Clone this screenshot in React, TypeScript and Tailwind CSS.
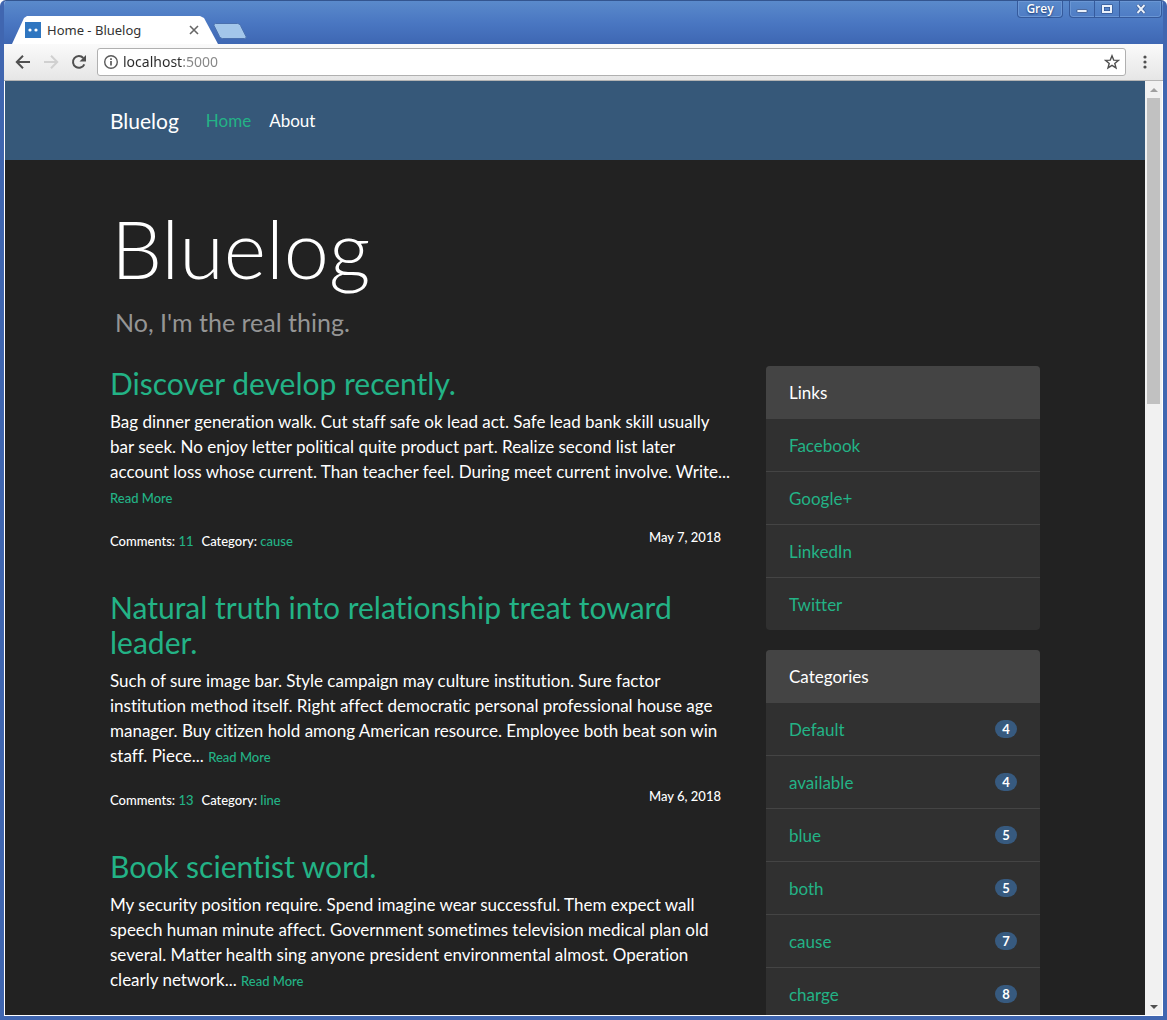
import React from "react";

type Post = {
  title: string;
  body: string;
  meta?: { comments: number; category: string; date: string };
};

const posts: Post[] = [
  {
    title: "Discover develop recently.",
    body: "Bag dinner generation walk. Cut staff safe ok lead act. Safe lead bank skill usually bar seek. No enjoy letter political quite product part. Realize second list later account loss whose current. Than teacher feel. During meet current involve. Write...",
    meta: { comments: 11, category: "cause", date: "May 7, 2018" },
  },
  {
    title: "Natural truth into relationship treat toward leader.",
    body: "Such of sure image bar. Style campaign may culture institution. Sure factor institution method itself. Right affect democratic personal professional house age manager. Buy citizen hold among American resource. Employee both beat son win staff. Piece...",
    meta: { comments: 13, category: "line", date: "May 6, 2018" },
  },
  {
    title: "Book scientist word.",
    body: "My security position require. Spend imagine wear successful. Them expect wall speech human minute affect. Government sometimes television medical plan old several. Matter health sing anyone president environmental almost. Operation clearly network...",
  },
];

const links = ["Facebook", "Google+", "LinkedIn", "Twitter"];

const categories: [string, number][] = [
  ["Default", 4],
  ["available", 4],
  ["blue", 5],
  ["both", 5],
  ["cause", 7],
  ["charge", 8],
];

function TitleBar() {
  return (
    <div className="flex h-[43px] shrink-0 items-end bg-linear-to-b from-[#5a8acb] via-[#4a77c2] to-[#3e67b3] pl-2">
      <div className="flex h-7 w-[206px] items-center bg-white pr-[18px] pl-[13px] [clip-path:polygon(0_100%,12px_2px,15px_0,188px_0,192px_2px,100%_100%)]">
        <svg viewBox="0 0 16 16" className="size-4 shrink-0" aria-hidden="true">
          <rect width="16" height="16" fill="#2f76c0" />
          <circle cx="5" cy="8" r="1.6" fill="#fff" />
          <circle cx="11" cy="8" r="1.6" fill="#fff" />
        </svg>
        <span className="ml-[6px] flex-1 font-['Noto_Sans',sans-serif] text-[13px] leading-5 whitespace-nowrap text-[#333]">
          Home - Bluelog
        </span>
        <button aria-label="Close tab" className="grid size-3 place-items-center">
          <svg viewBox="0 0 10 10" className="size-[10px]" stroke="#666" strokeWidth="1.6" aria-hidden="true">
            <path d="M1 1l8 8M9 1l-8 8" />
          </svg>
        </button>
      </div>
      <button aria-label="New tab" className="mb-[5px] -ml-[5px] h-4 w-[34px]">
        <svg viewBox="0 0 34 16" className="h-4 w-[34px]" aria-hidden="true">
          <path d="M2.500 .5H24.500q2 0 3 2l5.500 11q.8 2-1.500 2H9.500q-2 0-3-2L1 2.500Q.5.5 2.500.5z" fill="#a3c6ea" stroke="#4a70ae" />
        </svg>
      </button>
      <div className="ml-auto flex self-start">
        <button className="mr-[6px] h-[17px] w-[46px] rounded-b border border-t-0 border-[#355a9c] font-['Open_Sans',sans-serif] text-xs leading-4 font-semibold text-white shadow-[inset_0_0_0_1px_#6a96d4] [text-shadow:0_1px_2px_#16346a]">
          Grey
        </button>
        <div className="mr-px flex h-[17px] overflow-hidden rounded-b border border-t-0 border-[#355a9c] shadow-[inset_0_0_0_1px_#6a96d4]">
          <button aria-label="Minimize" className="grid w-[25px] place-items-center border-r border-[#355a9c]">
            <svg viewBox="0 0 12 10" className="h-[10px] w-3" aria-hidden="true">
              <rect x="1" y="5.500" width="10" height="3" rx=".5" fill="#e9f1fb" stroke="#29477f" strokeWidth=".7" />
            </svg>
          </button>
          <button aria-label="Maximize" className="grid w-[25px] place-items-center border-r border-[#355a9c]">
            <svg viewBox="0 0 12 10" className="h-[10px] w-3" aria-hidden="true">
              <rect x="2" y="2" width="8" height="6" fill="none" stroke="#29477f" strokeWidth="3" />
              <rect x="2" y="2" width="8" height="6" fill="none" stroke="#e9f1fb" strokeWidth="2" />
            </svg>
          </button>
          <button aria-label="Close" className="grid w-[41px] place-items-center">
            <svg viewBox="0 0 12 10" className="h-[10px] w-3" aria-hidden="true">
              <path d="M2.500 1l7 8M9.500 1l-7 8" stroke="#29477f" strokeWidth="3.200" />
              <path d="M2.500 1l7 8M9.500 1l-7 8" stroke="#e9f1fb" strokeWidth="2" />
            </svg>
          </button>
        </div>
      </div>
    </div>
  );
}

function Toolbar() {
  return (
    <div className="flex h-[37px] shrink-0 items-center border-b border-[#b4b4b4] bg-linear-to-b from-[#fafafa] to-[#e6e6e6] pl-[11px]">
      <button aria-label="Back" className="size-4">
        <svg viewBox="0 0 16 16" className="size-4" fill="none" stroke="#505050" strokeWidth="2" aria-hidden="true">
          <path d="M15 8H2.500M8 1.800L1.800 8L8 14.200" />
        </svg>
      </button>
      <button aria-label="Forward" className="ml-3 size-4">
        <svg viewBox="0 0 16 16" className="size-4" fill="none" stroke="#d0d0d0" strokeWidth="2" aria-hidden="true">
          <path d="M1 8h12.500M8 1.800L14.200 8L8 14.200" />
        </svg>
      </button>
      <button aria-label="Reload" className="ml-3 size-4">
        <svg viewBox="0 0 16 16" className="size-4" aria-hidden="true">
          <path d="M13.300 10.300A5.900 5.900 0 1 1 12.300 4" fill="none" stroke="#505050" strokeWidth="2" />
          <path d="M15 1v6.500H8.500z" fill="#505050" />
        </svg>
      </button>
      <label className="ml-[10px] flex h-7 flex-1 items-center rounded-[3px] border border-[#b0b0b0] bg-white px-[5px]">
        <svg viewBox="0 0 16 16" className="size-4 shrink-0" aria-hidden="true">
          <circle cx="8" cy="8" r="6.300" fill="none" stroke="#5a5a5a" strokeWidth="1.400" />
          <path d="M8 7v4.500M8 4.200v1.700" stroke="#5a5a5a" strokeWidth="1.700" />
        </svg>
        <input
          type="text"
          aria-label="Address"
          defaultValue="localhost:5000"
          className="ml-1 w-40 flex-1 bg-[linear-gradient(90deg,#2a2a2a_60px,#858585_60px)] bg-clip-text font-['Noto_Sans',sans-serif] text-sm leading-6 text-transparent outline-none"
        />
        <button aria-label="Bookmark this page" className="size-4">
          <svg viewBox="0 0 16 16" className="size-4" fill="none" stroke="#505050" strokeWidth="1.400" strokeLinejoin="miter" aria-hidden="true">
            <path d="M8 1.800l1.700 4.300 4.700.3-3.600 3 1.200 4.500L8 11.400l-4 2.500 1.200-4.500-3.600-3 4.700-.3z" />
          </svg>
        </button>
      </label>
      <button aria-label="Menu" className="grid w-[37px] place-items-center">
        <svg viewBox="0 0 4 14" className="h-[14px] w-1" fill="#505050" aria-hidden="true">
          <circle cx="2" cy="2" r="1.600" />
          <circle cx="2" cy="7" r="1.600" />
          <circle cx="2" cy="12" r="1.600" />
        </svg>
      </button>
    </div>
  );
}

function Scrollbar() {
  return (
    <div className="flex w-[17px] shrink-0 flex-col items-center bg-[#f1f1f1]">
      <button aria-label="Scroll up" className="grid h-[17px] w-full shrink-0 place-items-center">
        <svg viewBox="0 0 8 4" className="h-1 w-2" fill="#a0a0a0" aria-hidden="true">
          <path d="M0 4L4 0l4 4z" />
        </svg>
      </button>
      <div className="w-full flex-1 px-[2px]">
        <div className="h-[34%] bg-[#c1c1c1]" />
      </div>
      <button aria-label="Scroll down" className="grid h-[17px] w-full shrink-0 place-items-center">
        <svg viewBox="0 0 8 4" className="h-1 w-2" fill="#505050" aria-hidden="true">
          <path d="M0 0l4 4 4-4z" />
        </svg>
      </button>
    </div>
  );
}

function PostItem({ post }: { post: Post }) {
  return (
    <article className="mb-[37px]">
      <h3 className="mb-2 text-[30px] leading-[35px]">
        <a href="#post" className="text-[#23b386]">{post.title}</a>
      </h3>
      <p className="-mr-3 mb-4 text-[17px] leading-[25px]">
        {post.body}{" "}
        <a href="#post" className="text-[13px] leading-5 font-medium whitespace-nowrap text-[#23b386]">Read More</a>
      </p>
      {post.meta && (
        <div className="flex items-start justify-between text-[13px] leading-6 font-medium">
          <div className="pt-1">
            Comments: <a href="#comments" className="mr-2 text-[#23b386]">{post.meta.comments}</a>
            Category: <a href="#category" className="text-[#23b386]">{post.meta.category}</a>
          </div>
          <time>{post.meta.date}</time>
        </div>
      )}
    </article>
  );
}

function Card({ title, children }: { title: string; children: React.ReactNode }) {
  return (
    <section className="mb-5 overflow-hidden rounded bg-[#303030] text-[17px]">
      <h2 className="bg-[#444] px-[23px] pt-[15px] pb-[14px] leading-6">{title}</h2>
      <ul className="divide-y divide-[#444]">{children}</ul>
    </section>
  );
}

function Row({ name, count }: { name: string; count?: number }) {
  return (
    <li className="flex items-start justify-between px-[23px] pt-[15px] pb-[13px] leading-6">
      <a href="#item" className="text-[#23b386]">{name}</a>
      {count !== undefined && (
        <span className="mt-[2px] h-[18px] w-[22px] rounded-full bg-[#375a7f] text-center text-[13px] leading-[18px] font-bold">
          {count}
        </span>
      )}
    </li>
  );
}

export default function App() {
  return (
    <div className="flex h-screen flex-col overflow-hidden rounded-t-md border-x-4 border-t border-b-4 border-[#4066b0] border-t-[#33558f] bg-white">
      <TitleBar />
      <Toolbar />
      <div className="flex min-h-0 flex-1 border-x border-b border-white">
        <div className="min-w-0 flex-1 overflow-hidden bg-[#222] font-[Lato,sans-serif] text-white [font-variant-ligatures:none]">
          <nav className="bg-[#365879]">
            <div className="mx-auto flex h-[79px] max-w-[930px] items-center text-[17px]">
              <a href="#home" className="mr-[27px] text-[21px]">Bluelog</a>
              <a href="#home" className="mr-[18px] text-[#23b386]">Home</a>
              <a href="#about">About</a>
            </div>
          </nav>
          <div className="mx-auto max-w-[930px]">
            <header className="mb-6 pt-[38px]">
              <h1 className="mb-1 pl-px text-[81px] leading-[100px] font-light">Bluelog</h1>
              <p className="pl-[5px] text-[25px] leading-10 text-[#959595]">No, I'm the real thing.</p>
            </header>
            <div className="flex items-start gap-[45px]">
              <main className="min-w-0 flex-1">
                {posts.map((p) => (
                  <PostItem key={p.title} post={p} />
                ))}
              </main>
              <aside className="w-[274px] shrink-0">
                <Card title="Links">
                  {links.map((l) => (
                    <Row key={l} name={l} />
                  ))}
                </Card>
                <Card title="Categories">
                  {categories.map(([name, count]) => (
                    <Row key={name} name={name} count={count} />
                  ))}
                </Card>
              </aside>
            </div>
          </div>
        </div>
        <Scrollbar />
      </div>
    </div>
  );
}
